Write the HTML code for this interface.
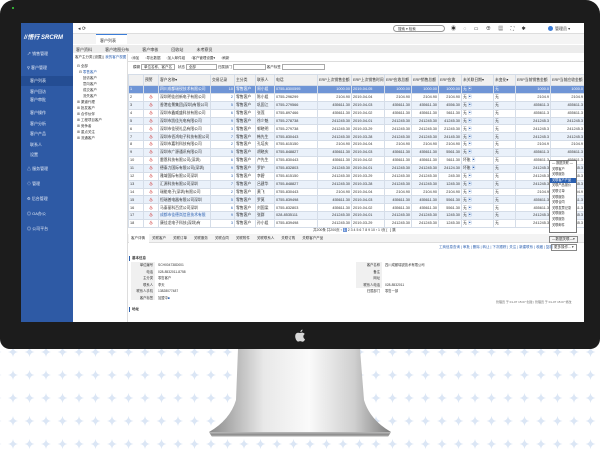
<!DOCTYPE html>
<html><head><meta charset="utf-8"><style>
*{margin:0;padding:0;box-sizing:border-box}
body{width:600px;height:457px;overflow:hidden;background:#fff;position:relative;font-family:"Liberation Sans","Noto Sans CJK SC",sans-serif;font-size:4px;color:#333}
.a{position:absolute}
#bez{left:0;top:0;width:600px;height:349px;background:#1c1c1c;border-radius:14px 14px 10px 10px}
#scr{left:21px;top:23px;width:563px;height:299px;background:#fff;overflow:hidden}
#side{left:0;top:0;width:52px;height:299px;background:#2e5aa5;color:#e6ecf7}
#side div{position:absolute;left:6px;font-size:4px;white-space:nowrap}
table{border-collapse:collapse;table-layout:fixed;position:absolute}
tr{height:7.9px}
td{border:0.5px solid #d5dde8;font-size:3.8px;white-space:nowrap;overflow:hidden;padding:0 1px;line-height:6.5px}
tr:nth-child(even) td{background:#eaf1fa}
tr.sel td{background:#6f95d6;color:#fff}
tr.h{height:11px}
tr.h td{background:#f0f0f0}
.r{text-align:right}
.w{color:#c33;text-align:center}
.b{color:#2a5fb0}
</style></head><body>
<svg class="a" style="left:0;top:340px" width="600" height="117">
<defs><pattern id="st" width="16.5" height="23" patternUnits="userSpaceOnUse" x="5" y="4">
<path d="M8 3 Q8.6 7.4 13 8 Q8.6 8.6 8 13 Q7.4 8.6 3 8 Q7.4 7.4 8 3Z" fill="#dbe6f5"/></pattern>
<linearGradient id="g" x1="0" x2="1"><stop offset="0" stop-color="#8a8a8a"/><stop offset=".3" stop-color="#e8e8e8"/><stop offset=".55" stop-color="#fafafa"/><stop offset=".8" stop-color="#cfcfcf"/><stop offset="1" stop-color="#7d7d7d"/></linearGradient>
<linearGradient id="g2" x1="0" y1="0" x2="0" y2="1"><stop offset="0" stop-color="#bbb"/><stop offset=".6" stop-color="#888"/><stop offset="1" stop-color="#eee"/></linearGradient></defs>
<rect y="8" width="600" height="109" fill="url(#st)"/>
<path d="M238 9 L360 9 L364 60 Q370 80 391 92 L209 92 Q230 80 236 60Z" fill="url(#g)"/>
<path d="M209 92 L391 92 L388 97 L212 97Z" fill="url(#g2)"/>
</svg>
<div class="a" id="bez"></div>
<div class="a" style="left:12px;top:7px;width:2px;height:2px;background:#3a3"></div>
<svg class="a" style="left:294px;top:329px" width="12" height="13"><path d="M8.5 0.5 Q8.6 2.6 6.4 3.2 Q6.3 1.2 8.5 0.5Z M6 4 Q7.2 3.5 8.5 3.6 Q10 3.8 10.8 5 Q9 6.2 9.4 8.3 Q9.7 9.6 11 10.2 Q10.2 12.5 8.6 12.7 Q7.6 12.7 6.8 12.3 Q6 12 5 12.4 Q3.7 13 2.8 11.8 Q0.5 8.6 1.4 5.7 Q2.3 3.7 4.2 3.8 Q5 3.8 6 4Z" fill="#d8d8d8"/></svg>
<div class="a" id="scr">
 <div class="a" id="side">
  <div style="left:3px;top:9px;font-size:6px;font-weight:bold;font-style:italic;color:#fff">//悟行 SRCRM</div>
  <div style="top:28px">↗ 销售管理</div>
  <div style="top:42px">⚲ 客户管理</div>
  <div style="left:0;top:53px;width:52px;height:10px;background:#244d93"></div>
  <div style="top:55px;left:9px">客户列表</div>
  <div style="top:66px;left:9px">客户回访</div>
  <div style="top:74px;left:9px">客户审批</div>
  <div style="top:87px;left:9px">客户操作</div>
  <div style="top:98px;left:9px">客户分析</div>
  <div style="top:108px;left:9px">客户产品</div>
  <div style="top:119px;left:9px">联系人</div>
  <div style="top:129px;left:9px">设置</div>
  <div style="top:143px">△ 服务管理</div>
  <div style="top:158px">◇ 管理</div>
  <div style="top:173px">⚙ 后台管理</div>
  <div style="top:188px">◎ OA办公</div>
  <div style="top:203px">◎ 公司平台</div>
 </div>
 <div class="a" style="left:52px;top:0;width:511px;height:11px;border-bottom:0.5px solid #ddd"></div>
 <div class="a" style="left:57px;top:3px;font-size:5px">◂ ⟳</div>
 <div class="a" style="left:372px;top:2px;width:52px;height:7px;border:0.6px solid #999;border-radius:4px;font-size:3.5px;padding-left:4px;line-height:6px">搜索 ▾ 检索</div>
 <div class="a" style="left:430px;top:2px;font-size:5px;letter-spacing:3px">◉ ◌ ▭ ⊕ ▦ ⛶ ✱</div>
 <div class="a" style="left:527px;top:3px;width:5px;height:5px;border-radius:50%;background:#3b7dd8"></div>
 <div class="a" style="left:534px;top:3px;font-size:4px">管理员 ▾</div>
 <div class="a" style="left:52px;top:11px;width:511px;height:10px;background:#f4f4f4"></div>
 <div class="a" style="left:75px;top:11px;width:31px;height:10px;background:#fff;border-top:1px solid #3b7dd8;padding:3px 4px">客户列表</div>
 <div class="a" style="left:52px;top:22px;width:511px;height:8px;background:#ececec"></div>
 <div class="a" style="left:55px;top:24px;word-spacing:12px">客户资料 客户地图分布 客户审核 回收站 未考察员</div>
 <div class="a" style="left:52px;top:31px;width:55px;height:268px;border-right:0.5px solid #ddd"></div>
 <div class="a" style="left:54px;top:32px;font-size:3.5px">客户主分类 [设置] | <span class="b">我的客户视图</span></div>
 <div class="a" style="left:56px;top:40px;font-size:3.5px;line-height:6px">⊟ 全部<br>&nbsp;&nbsp;⊟ <span class="b">零售客户</span><br>&nbsp;&nbsp;&nbsp;&nbsp;&nbsp;&nbsp;回访客户<br>&nbsp;&nbsp;&nbsp;&nbsp;&nbsp;&nbsp;意向客户<br>&nbsp;&nbsp;&nbsp;&nbsp;&nbsp;&nbsp;成交客户<br>&nbsp;&nbsp;&nbsp;&nbsp;&nbsp;&nbsp;流失客户<br>⊞ 渠道代理<br>⊞ 批发客户<br>⊞ 合作伙伴<br>⊞ 工程项目客户<br>⊞ 竞争者<br>⊞ 重点关注<br>⊞ 流通客户</div>
 <div class="a" style="left:107px;top:31px;width:456px;height:8px;border-bottom:0.5px solid #ddd"></div>
 <div class="a" style="left:110px;top:33px;font-size:3.5px;word-spacing:5px">▫添加 ▫导出数据 ▫加入邮件组 ▫客户管理设置▾ ▫刷新</div>
 <div class="a" style="left:112px;top:42px;font-size:3.5px">模糊 <span style="border:0.5px solid #aaa;padding:0 2px">单位名称、客户名</span> &nbsp; 状态 <span style="border:0.5px solid #aaa;padding:0 20px 0 2px">全部</span> 归属部门 <span style="border:0.5px solid #aaa;padding:0 28px 0 2px">&nbsp;</span> 客户标签 <span style="border:0.5px solid #aaa;padding:0 20px">&nbsp;</span></div>
 <table style="left:107px;top:51px;width:456px">
 <colgroup><col style="width:15px"><col style="width:15px"><col style="width:52px"><col style="width:24px"><col style="width:21px"><col style="width:19px"><col style="width:43px"><col style="width:34px"><col style="width:33px"><col style="width:27px"><col style="width:27px"><col style="width:23px"><col style="width:32px"><col style="width:22px"><col style="width:35px"><col style="width:34px"></colgroup>
 <tr class="h"><td></td><td>预警</td><td>客户名称▾</td><td>交易记录</td><td>主分类</td><td>联系人</td><td>电话</td><td>ERP上次销售金额</td><td>ERP上次销售时间</td><td>ERP应收总额</td><td>ERP销售总额</td><td>ERP应收</td><td>未关联日期▾</td><td>未变化▾</td><td>ERP当前销售金额</td><td>ERP当前应收金额</td></tr>
 <tr class="sel"><td>1</td><td></td><td>四川成都瑞锐技术有限公司</td><td class="r">10</td><td>零售客户</td><td>周小姐</td><td>0755-8300595</td><td class="r">1000.00</td><td>2019-04-05</td><td class="r">1000.00</td><td class="r">1000.00</td><td class="r">1000.00</td><td>无 ▣</td><td>无</td><td class="r">1000.0</td><td class="r">1000.0</td></tr>
 <tr><td>2</td><td class="w">♨</td><td>深圳明佳创新电子有限公司</td><td class="r b">2</td><td>零售客户</td><td>陈小姐</td><td>0755-296299</td><td class="r">2104.90</td><td>2019-04-04</td><td class="r">2104.90</td><td class="r">2104.90</td><td class="r">2104.90</td><td>无 <span class="b">▣</span></td><td>无</td><td class="r">2104.9</td><td class="r">2104.9</td></tr>
 <tr><td>3</td><td class="w">♨</td><td>香港宏景集团(深圳)有限公司</td><td class="r b">5</td><td>零售客户</td><td>巩固江</td><td>0755-279566</td><td class="r">455611.30</td><td>2019-04-03</td><td class="r">455611.30</td><td class="r">455611.30</td><td class="r">4556.30</td><td>无 <span class="b">▣</span></td><td>无</td><td class="r">455611.3</td><td class="r">455611.3</td></tr>
 <tr><td>4</td><td class="w">♨</td><td>深圳市鑫威盛科技有限公司</td><td class="r b">6</td><td>零售客户</td><td>张莲</td><td>0755-897466</td><td class="r">455611.30</td><td>2019-04-02</td><td class="r">455611.30</td><td class="r">455611.30</td><td class="r">5611.30</td><td>无 <span class="b">▣</span></td><td>无</td><td class="r">455611.3</td><td class="r">455611.3</td></tr>
 <tr><td>5</td><td class="w">♨</td><td>深圳市凯佳光电有限公司</td><td class="r b">9</td><td>零售客户</td><td>徐少魁</td><td>0755-278738</td><td class="r">241245.30</td><td>2019-04-01</td><td class="r">241245.30</td><td class="r">241245.30</td><td class="r">41245.30</td><td>无 <span class="b">▣</span></td><td>无</td><td class="r">241245.3</td><td class="r">241245.3</td></tr>
 <tr><td>6</td><td class="w">♨</td><td>深圳市佳锐礼品有限公司</td><td class="r b">3</td><td>零售客户</td><td>郭晓明</td><td>0755-279738</td><td class="r">241245.30</td><td>2019-03-29</td><td class="r">241245.30</td><td class="r">241245.30</td><td class="r">21245.30</td><td>无 <span class="b">▣</span></td><td>无</td><td class="r">241245.3</td><td class="r">241245.3</td></tr>
 <tr><td>7</td><td class="w">♨</td><td>深圳市佰鸿电子科技有限公司</td><td class="r b">7</td><td>零售客户</td><td>韩先生</td><td>0755-830443</td><td class="r">241245.30</td><td>2019-03-28</td><td class="r">241245.30</td><td class="r">241245.30</td><td class="r">24145.30</td><td>无 <span class="b">▣</span></td><td>无</td><td class="r">241245.3</td><td class="r">241245.3</td></tr>
 <tr><td>8</td><td class="w">♨</td><td>深圳市嘉利科技有限公司</td><td class="r b">2</td><td>零售客户</td><td>孔培庆</td><td>0755-615150</td><td class="r">2104.90</td><td>2019-04-04</td><td class="r">2104.90</td><td class="r">2104.90</td><td class="r">2104.90</td><td>无 <span class="b">▣</span></td><td>无</td><td class="r">2104.9</td><td class="r">2104.9</td></tr>
 <tr><td>9</td><td class="w">♨</td><td>深圳市广源通讯有限公司</td><td class="r b">5</td><td>零售客户</td><td>胡晓庆</td><td>0755-848827</td><td class="r">455611.30</td><td>2019-04-03</td><td class="r">455611.30</td><td class="r">455611.30</td><td class="r">5561.30</td><td>无 <span class="b">▣</span></td><td>无</td><td class="r">455611.3</td><td class="r">455611.3</td></tr>
 <tr><td>10</td><td class="w">♨</td><td>雷恩科技有限公司(深圳)</td><td class="r b">6</td><td>零售客户</td><td>卢先生</td><td>0755-830443</td><td class="r">455611.30</td><td>2019-04-02</td><td class="r">455611.30</td><td class="r">455611.30</td><td class="r">5611.30</td><td>坏账 <span class="b">▣</span></td><td>无</td><td class="r">455611.3</td><td class="r">455611.3</td></tr>
 <tr><td>11</td><td class="w">♨</td><td>德泰力国际有限公司(深圳)</td><td class="r b">9</td><td>零售客户</td><td>罗炉</td><td>0755-832803</td><td class="r">241245.30</td><td>2019-04-01</td><td class="r">241245.30</td><td class="r">241245.30</td><td class="r">24124.30</td><td>坏账 <span class="b">▣</span></td><td>无</td><td class="r">241245.3</td><td class="r">241245.3</td></tr>
 <tr><td>12</td><td class="w">♨</td><td>雅域国际有限公司深圳</td><td class="r b">3</td><td>零售客户</td><td>李碧</td><td>0755-615150</td><td class="r">241245.30</td><td>2019-03-29</td><td class="r">241245.30</td><td class="r">241245.30</td><td class="r">245.30</td><td>无 <span class="b">▣</span></td><td>无</td><td class="r">241245.3</td><td class="r">241245.3</td></tr>
 <tr><td>13</td><td class="w">♨</td><td>汇源科技有限公司深圳</td><td class="r b">7</td><td>零售客户</td><td>吕建华</td><td>0755-848827</td><td class="r">241245.30</td><td>2019-03-28</td><td class="r">241245.30</td><td class="r">241245.30</td><td class="r">1245.30</td><td>无 <span class="b">▣</span></td><td>无</td><td class="r">241245.3</td><td class="r">241245.3</td></tr>
 <tr><td>14</td><td class="w">♨</td><td>瑞能电子(深圳)有限公司</td><td class="r b">2</td><td>零售客户</td><td>黄飞</td><td>0755-830443</td><td class="r">2104.90</td><td>2019-04-04</td><td class="r">2104.90</td><td class="r">2104.90</td><td class="r">2104.90</td><td>无 <span class="b">▣</span></td><td>无</td><td class="r">2104.9</td><td class="r">2104.9</td></tr>
 <tr><td>15</td><td class="w">♨</td><td>恒瑞普电器有限公司深圳</td><td class="r b">5</td><td>零售客户</td><td>罗莫</td><td>0755-839498</td><td class="r">455611.30</td><td>2019-04-03</td><td class="r">455611.30</td><td class="r">455611.30</td><td class="r">5561.30</td><td>无 <span class="b">▣</span></td><td>无</td><td class="r">455611.3</td><td class="r">455611.3</td></tr>
 <tr><td>16</td><td class="w">♨</td><td>马泰丽科百货公司深圳</td><td class="r b">6</td><td>零售客户</td><td>刘国梁</td><td>0755-832803</td><td class="r">455611.30</td><td>2019-04-02</td><td class="r">455611.30</td><td class="r">455611.30</td><td class="r">5561.30</td><td>无 <span class="b">▣</span></td><td>无</td><td class="r">455611.3</td><td class="r">455611.3</td></tr>
 <tr><td>17</td><td class="w">♨</td><td class="b">成都市佳德岚信息技术有限</td><td class="r b">9</td><td>零售客户</td><td>张群</td><td>028-8535111</td><td class="r">241245.30</td><td>2019-04-01</td><td class="r">241245.30</td><td class="r">241245.30</td><td class="r">1245.30</td><td>无 <span class="b">▣</span></td><td>无</td><td class="r">241245.3</td><td class="r">241245.3</td></tr>
 <tr><td>18</td><td class="w">♨</td><td>康佳龙电子科技(深圳)有</td><td class="r b">3</td><td>零售客户</td><td>孙小姐</td><td>0755-839498</td><td class="r">241245.30</td><td>2019-03-29</td><td class="r">241245.30</td><td class="r">241245.30</td><td class="r">1245.30</td><td>无 <span class="b">▣</span></td><td>无</td><td class="r">241245.3</td><td class="r">241245.3</td></tr>
 </table>
 <div class="a" style="left:292px;top:205px;font-size:3.5px">共200条 共200页 ‹ <span style="background:#6f95d6;color:#fff;padding:0 1px">1</span> 2 3 4 5 6 7 8 9 10 › 1 /页 [&nbsp;&nbsp;&nbsp;] 跳</div>
 <div class="a" style="left:107px;top:211px;width:456px;height:9px;background:#f3f3f3;border-bottom:0.5px solid #ddd"></div>
 <div class="a" style="left:108px;top:211px;width:20px;height:9px;background:#fff"></div>
 <div class="a" style="left:110px;top:213px;font-size:3.5px;word-spacing:6px">客户详情 关联客户 关联订单 关联服务 关联合同 关联附件 关联联系人 关联订购 关联客户产品</div>
 <div class="a" style="left:528px;top:213px;font-size:3.5px;border:0.5px solid #888;padding:0 2px">—数据关联—▾</div>
 <div class="a" style="left:418px;top:222px;font-size:3.5px;color:#2a5fb0">工商信息查询 | 审批 | 删除 | 转让 | 下次跟踪 | 关注 | 新建联系 | 收藏 | 复制</div>
 <div class="a" style="left:530px;top:221px;font-size:3.5px;border:0.5px solid #888;padding:0 2px">更多操作... ▾</div>
 <div class="a" style="left:108px;top:233px;font-size:3.5px;border-left:1px solid #2a5fb0;padding-left:2px;font-weight:bold">基本信息</div>
 <div class="a" style="left:110px;top:239px;width:24px;height:38px;background:#f0f0f0"></div>
 <div class="a" style="left:112px;top:239px;font-size:3.3px;line-height:6.6px;text-align:right;width:20px">单位编号<br>电话<br>主分类<br>联系人<br>联系人手机<br>客户标签</div>
 <div class="a" style="left:137px;top:239px;font-size:3.3px;line-height:6.6px">SCH004738D001<br>028-8532011-8758<br>零售客户<br>李天<br>13828077487<br>加盟中<span class="b">■</span></div>
 <div class="a" style="left:335px;top:239px;width:26px;height:26px;background:#f0f0f0"></div>
 <div class="a" style="left:336px;top:239px;font-size:3.3px;line-height:6.6px;text-align:right;width:23px">客户名称<br>备注<br>网址<br>联系人电话<br>归属部门</div>
 <div class="a" style="left:364px;top:239px;font-size:3.3px;line-height:6.6px">四川成都瑞锐技术有限公司<br>&nbsp;<br>&nbsp;<br>028-8532011<br>零售一部</div>
 <div class="a" style="left:475px;top:277px;font-size:3px;color:#666">管理员 于 01-07 15:07 创建 | 管理员 于 01-07 15:07 修改</div>
 <div class="a" style="left:108px;top:284px;font-size:3.5px;border-left:1px solid #2a5fb0;padding-left:2px;font-weight:bold">地址</div>
 <div class="a" style="left:528px;top:137px;width:28px;height:73px;background:#fff;border:0.5px solid #777;font-size:3.2px;line-height:5.6px;padding-left:2px">— 数据关联 —<br>关联客户<br>关联服务<br><span style="background:#2a5fb0;color:#fff;display:block;margin-left:-2px;padding-left:2px">关联客户产品</span>关联产品报价<br>关联订单<br>关联服务<br>关联合同<br>关联发票记录<br>关联服务<br>关联服务<br>关联邮件</div>
</div>
</body></html>
